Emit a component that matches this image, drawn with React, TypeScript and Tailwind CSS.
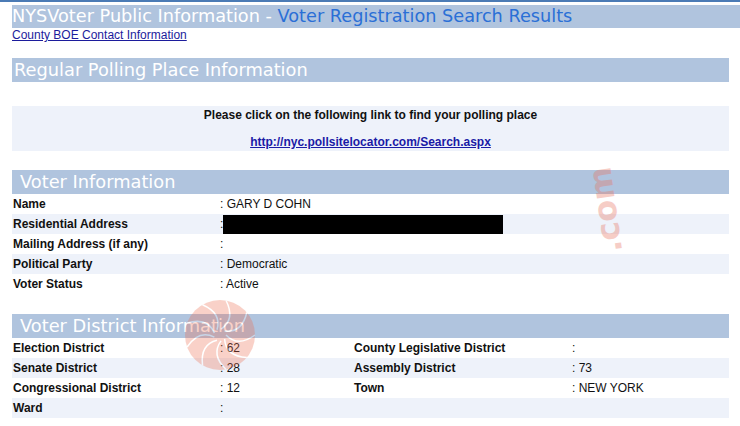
const voterRows = [
  { label: "Name", value: ": GARY D COHN" },
  { label: "Residential Address", value: ":", redacted: true },
  { label: "Mailing Address (if any)", value: ":" },
  { label: "Political Party", value: ": Democratic" },
  { label: "Voter Status", value: ": Active" },
];

const districtRows = [
  ["Election District", ": 62", "County Legislative District", ":"],
  ["Senate District", ": 28", "Assembly District", ": 73"],
  ["Congressional District", ": 12", "Town", ": NEW YORK"],
  ["Ward", ":", "", ""],
];

function SectionBar({ title, indent }: { title: string; indent: string }) {
  return (
    <div
      className={`h-[24px] bg-[#b0c4de] text-white text-[17.8px] leading-[24px] font-['DejaVu_Sans',Verdana,sans-serif] ${indent}`}
    >
      {title}
    </div>
  );
}

function Watermark() {
  return (
    <div className="pointer-events-none absolute inset-0">
      <svg className="absolute left-[184px] top-[299px] opacity-30" width="72" height="72" viewBox="0 0 72 72">
        <circle cx="36" cy="36" r="35" fill="#ec6b4c" />
        {[0, 40, 80, 120, 160, 200, 240, 280, 320].map((a) => {
          const r = (a * Math.PI) / 180;
          const r2 = ((a + 35) * Math.PI) / 180;
          return (
            <path
              key={a}
              d={`M ${36 + 6 * Math.cos(r)} ${36 + 6 * Math.sin(r)} Q ${36 + 22 * Math.cos(r2)} ${36 + 22 * Math.sin(r2)} ${36 + 35 * Math.cos(r)} ${36 + 35 * Math.sin(r)}`}
              stroke="white"
              strokeWidth="1.5"
              fill="none"
            />
          );
        })}
      </svg>
      <div className="absolute left-[562px] top-[194px] rotate-[-98deg] text-[32px] font-bold text-[#e8735f] opacity-35 font-['DejaVu_Sans',sans-serif] leading-none">
        .com
      </div>
    </div>
  );
}

export default function App() {
  return (
    <div className="relative w-[740px] h-[426px] overflow-hidden bg-white text-[12px] text-[#111] font-['Liberation_Sans',Arial,sans-serif]">
      <div className="h-[2px] bg-[#4b7bb5]" />
      <div className="pt-[3px] pl-[12px]">
        <div className="h-[23px] bg-[#b0c4de] text-[17.7px] leading-[23px] font-['DejaVu_Sans',Verdana,sans-serif] whitespace-nowrap">
          <span className="text-white">NYSVoter Public Information - </span>
          <span className="text-[#2a6fd6]">Voter Registration Search Results</span>
        </div>
        <a href="#" className="block leading-[14px] text-[#1c1c9c] underline">
          County BOE Contact Information
        </a>
      </div>

      <div className="pl-[12px] pr-[11px]">
        <div className="mt-[16px]">
          <SectionBar title="Regular Polling Place Information" indent="pl-[2px]" />
        </div>

        <div className="mt-[24px] h-[45px] bg-[#eef2fa] pt-[2px] text-center font-bold">
          <div className="leading-[14px]">Please click on the following link to find your polling place</div>
          <a href="#" className="block mt-[13px] leading-[14px] text-[#1a1aa6] underline">
            http://nyc.pollsitelocator.com/Search.aspx
          </a>
        </div>

        <div className="mt-[19px]">
          <SectionBar title="Voter Information" indent="pl-[8px]" />
        </div>
        <div className="flex flex-col">
          {voterRows.map((row, i) => (
            <div
              key={row.label}
              className={`flex h-[20px] items-center ${i % 2 === 1 ? "bg-[#eef2fa]" : ""}`}
            >
              <div className="w-[208px] pl-[1px] font-bold">{row.label}</div>
              <div className="relative flex-1 h-full flex items-center">
                {row.value}
                {row.redacted && <div className="absolute left-[3px] top-[1px] h-[19px] w-[280px] bg-black" />}
              </div>
            </div>
          ))}
        </div>

        <div className="mt-[20px]">
          <SectionBar title="Voter District Information" indent="pl-[8px]" />
        </div>
        <div className="flex flex-col">
          {districtRows.map((row, i) => (
            <div
              key={row[0]}
              className={`grid grid-cols-[208px_134px_218px_1fr] h-[20px] items-center ${i % 2 === 1 ? "bg-[#eef2fa]" : ""}`}
            >
              <div className="pl-[1px] font-bold">{row[0]}</div>
              <div>{row[1]}</div>
              <div className="font-bold">{row[2]}</div>
              <div>{row[3]}</div>
            </div>
          ))}
        </div>
      </div>

      <Watermark />
    </div>
  );
}
